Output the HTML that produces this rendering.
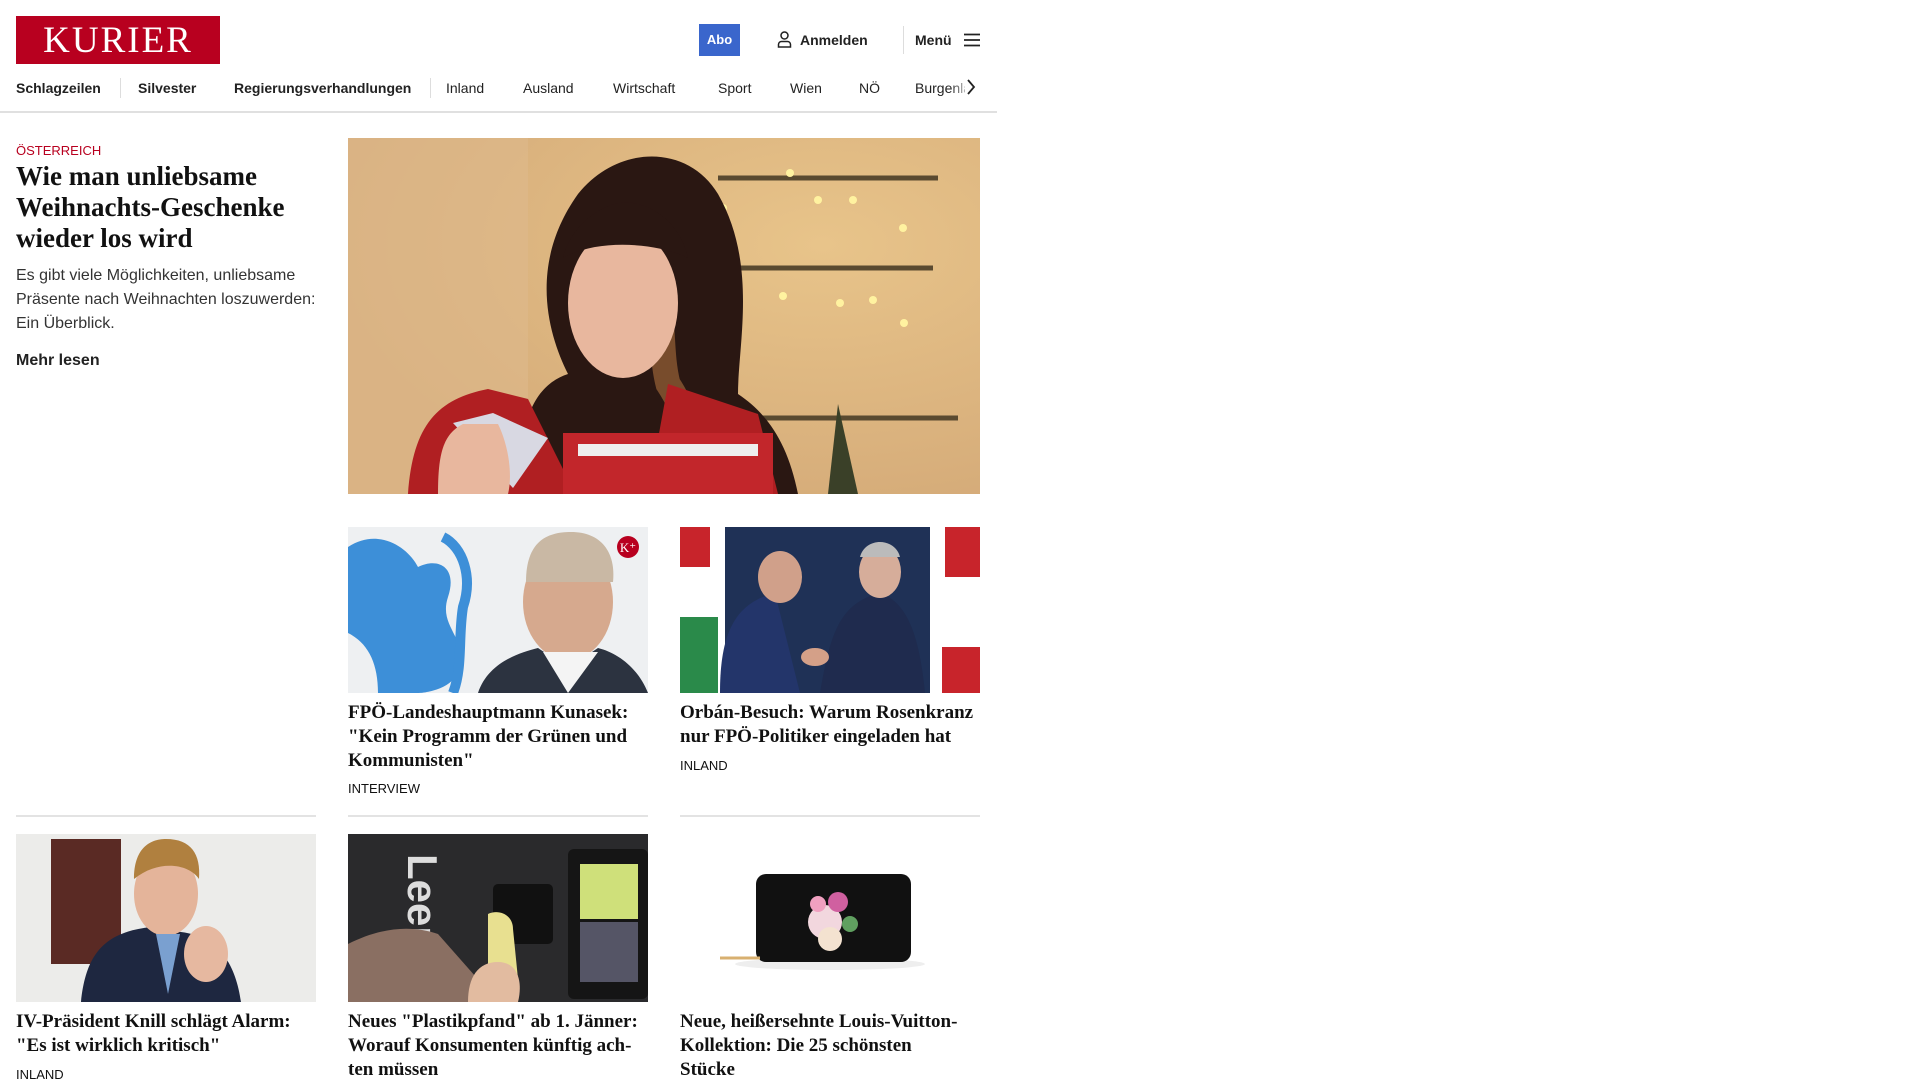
<!DOCTYPE html>
<html><head><meta charset="utf-8">
<style>
*{margin:0;padding:0;box-sizing:border-box}
body{width:1920px;height:1080px;overflow:hidden;background:#fff;font-family:"Liberation Sans",sans-serif;color:#1a1a1a;position:relative}
.a{position:absolute}
.logo{left:16px;top:16px;width:204px;height:48px;background:#b8001f;color:#fff;font-family:"Liberation Serif",serif;font-size:37px;letter-spacing:2px;text-align:center;line-height:50px}
.abo{left:699px;top:24px;width:41px;height:32px;background:#3a66cc;color:#fff;font-size:13px;font-weight:bold;text-align:center;line-height:32px}
.nav{top:80px;font-size:14px;color:#222;white-space:nowrap}
.sep{width:1px;background:#ddd}
.slab{font-family:"Liberation Serif",serif;font-weight:bold;color:#111}
.t{font-size:19px;line-height:24px;width:304px}
.tag{font-size:13px;color:#111}
.hr{height:2px;background:#e3e3e3;top:815px;width:300px}
</style></head><body>
<div class="a logo">KURIER</div>
<div class="a abo">Abo</div>
<svg class="a" style="left:777px;top:31px" width="15" height="17" viewBox="0 0 15 17"><circle cx="7.5" cy="4.5" r="3.5" fill="none" stroke="#222" stroke-width="1.5"/><path d="M1.5 16v-2.5a3 3 0 0 1 3-3h6a3 3 0 0 1 3 3V16z" fill="none" stroke="#222" stroke-width="1.5"/></svg>
<div class="a" style="left:800px;top:32px;font-size:14px;font-weight:bold;color:#222">Anmelden</div>
<div class="a sep" style="left:903px;top:26px;height:28px"></div>
<div class="a" style="left:915px;top:32px;font-size:14px;font-weight:bold;color:#222">Menü</div>
<svg class="a" style="left:964px;top:33px" width="16" height="14"><path d="M0 1.5h16M0 7h16M0 12.5h16" stroke="#222" stroke-width="1.8"/></svg>

<div class="a nav" style="left:16px;font-weight:bold">Schlagzeilen</div>
<div class="a sep" style="left:120px;top:78px;height:20px"></div>
<div class="a nav" style="left:138px;font-weight:bold">Silvester</div>
<div class="a nav" style="left:234px;font-weight:bold">Regierungsverhandlungen</div>
<div class="a sep" style="left:430px;top:78px;height:20px"></div>
<div class="a nav" style="left:446px">Inland</div>
<div class="a nav" style="left:523px">Ausland</div>
<div class="a nav" style="left:613px">Wirtschaft</div>
<div class="a nav" style="left:718px">Sport</div>
<div class="a nav" style="left:790px">Wien</div>
<div class="a nav" style="left:859px">NÖ</div>
<div class="a nav" style="left:915px;width:50px;overflow:hidden">Burgenland</div>
<div class="a" style="left:950px;top:74px;width:22px;height:26px;background:linear-gradient(90deg,rgba(255,255,255,0),#fff)"></div>
<svg class="a" style="left:966px;top:79px" width="10" height="16"><path d="M2 1l6 7-6 7" fill="none" stroke="#222" stroke-width="1.8"/></svg>
<div class="a" style="left:0;top:111px;width:997px;height:2px;background:#e0e0e0"></div>

<div class="a" style="left:16px;top:143px;font-size:13px;color:#b8001f">ÖSTERREICH</div>
<div class="a slab" style="left:16px;top:161px;width:310px;font-size:27px;line-height:31px">Wie man unliebsame Weihnachts-Geschenke wieder los wird</div>
<div class="a" style="left:16px;top:264px;width:310px;font-size:16px;line-height:24px;color:#333">Es gibt viele Möglichkeiten, unliebsame Präsente nach Weihnachten loszuwerden: Ein Überblick.</div>
<div class="a" style="left:16px;top:352px;font-size:16px;font-weight:bold;color:#222">Mehr lesen</div>

<svg class="a" style="left:348px;top:138px" width="632" height="356" viewBox="0 0 632 356">
<defs><radialGradient id="g1" cx="0.75" cy="0.3" r="0.8"><stop offset="0" stop-color="#e8c48a"/><stop offset="1" stop-color="#d4aa78"/></radialGradient></defs>
<rect width="632" height="356" fill="url(#g1)"/>
<rect x="0" y="0" width="180" height="356" fill="#ddb98c" opacity=".6"/>
<path d="M370 40h220M385 130h200M410 280h200" stroke="#5a4a30" stroke-width="5"/>
<g fill="#fff2a0"><circle cx="442" cy="35" r="4"/><circle cx="470" cy="62" r="4"/><circle cx="505" cy="62" r="4"/><circle cx="555" cy="90" r="4"/><circle cx="435" cy="158" r="4"/><circle cx="492" cy="165" r="4"/><circle cx="525" cy="162" r="4"/><circle cx="556" cy="185" r="4"/><circle cx="375" cy="70" r="4"/></g>
<path d="M480 356l10-90 20 90z" fill="#3a4028"/>
<path d="M170 356c0-80 20-110 50-120-20-40-40-110 10-180 40-50 110-50 140 0 40 70 20 150 20 200 30 20 50 50 60 100z" fill="#2a1712"/>
<path d="M350 356c0-40 -10-80 -30-110 -10-40 0-80 -20-100" fill="none" stroke="#9a6438" stroke-width="25" opacity=".7"/>
<ellipse cx="275" cy="165" rx="55" ry="75" fill="#e8b79e"/>
<path d="M215 120c10-40 50-60 70-55 30 5 50 30 55 55-30-15-90-20-125 0z" fill="#2a1712"/>
<path d="M60 356c5-70 30-95 80-105l40 10 50 100zM300 356l20-110 90 30 20 80z" fill="#b01f22"/>
<rect x="215" y="295" width="210" height="61" fill="#c2262b"/>
<path d="M230 312h180" stroke="#eee" stroke-width="12"/>
<path d="M105 285l40-10 55 25-35 50z" fill="#d8d8e2"/>
<path d="M90 356c0-40 5-60 25-70h35c10 20 15 50 10 70z" fill="#e8b79e"/>
</svg>

<!-- row 2 -->
<svg class="a" style="left:348px;top:527px" width="300" height="166" viewBox="0 0 300 166">
<rect width="300" height="166" fill="#eef0f2"/>
<path d="M0 20c30-20 60 0 70 20 20-10 40 0 30 30-10 30 20 40 10 70 0 20-30 26-40 26H30c0-30-10-50-30-60z" fill="#3d8fd8"/>
<path d="M95 10c20 10 30 40 20 70-5 30 0 60-10 86" fill="none" stroke="#3d8fd8" stroke-width="10"/>
<ellipse cx="220" cy="75" rx="45" ry="58" fill="#d6a98e"/>
<path d="M178 55c0-40 20-50 45-50 30 0 45 20 42 50z" fill="#c9b8a4"/>
<path d="M130 166c10-30 40-40 60-45l30 20 30-20c20 5 40 20 50 45z" fill="#2c3340"/>
<path d="M195 125l25 41 30-41z" fill="#f4f4f4"/>
<circle cx="280" cy="20" r="11" fill="#b8001f"/><text x="280" y="25" font-family="Liberation Serif" font-size="13" fill="#fff" text-anchor="middle">K⁺</text>
</svg>
<svg class="a" style="left:680px;top:527px" width="300" height="166" viewBox="0 0 300 166">
<rect width="300" height="166" fill="#1f3156"/>
<path d="M0 0h45v166H0z" fill="#fff"/><path d="M0 0h30v40H0z" fill="#c8242b"/><path d="M0 90h38v76H0z" fill="#2a8a4a"/>
<path d="M250 0h50v166h-50z" fill="#fff"/><path d="M265 0h35v50h-35zM262 120h38v46h-38z" fill="#c8242b"/>
<path d="M40 166c0-60 15-90 55-100l25 100z" fill="#23356a"/>
<ellipse cx="100" cy="50" rx="22" ry="26" fill="#d0a08a"/>
<path d="M140 166c10-60 20-90 60-100 30 10 40 50 45 100z" fill="#1f2b4e"/>
<ellipse cx="200" cy="45" rx="21" ry="26" fill="#d6ad9a"/>
<path d="M180 30c5-20 35-20 40 0z" fill="#bbb"/>
<ellipse cx="135" cy="130" rx="14" ry="9" fill="#d4a088"/>
</svg>
<div class="a slab t" style="left:348px;top:701px">FPÖ-Landeshauptmann Kunasek: "Kein Programm der Grünen und Kommunisten"</div>
<div class="a tag" style="left:348px;top:781px">INTERVIEW</div>
<div class="a slab t" style="left:680px;top:701px">Orbán-Besuch: Warum Rosenkranz nur FPÖ-Politiker eingeladen hat</div>
<div class="a tag" style="left:680px;top:758px">INLAND</div>

<div class="a hr" style="left:16px"></div>
<div class="a hr" style="left:348px"></div>
<div class="a hr" style="left:680px"></div>

<!-- row 3 -->
<svg class="a" style="left:16px;top:834px" width="300" height="168" viewBox="0 0 300 168">
<rect width="300" height="168" fill="#ececea"/>
<rect x="35" y="5" width="70" height="125" fill="#5a2a24"/>
<path d="M65 168c5-50 25-70 70-75l30 5c40 5 55 35 60 70z" fill="#1e2740"/>
<ellipse cx="150" cy="60" rx="32" ry="42" fill="#e4b49a"/>
<path d="M118 45c0-30 15-40 32-40 25 0 35 15 33 40-10-15-40-20-65 0z" fill="#b0803f"/>
<path d="M140 100l12 60 12-60z" fill="#7aa0d0"/>
<ellipse cx="190" cy="120" rx="22" ry="28" fill="#e6b8a0"/>
</svg>
<svg class="a" style="left:348px;top:834px" width="300" height="168" viewBox="0 0 300 168">
<rect width="300" height="168" fill="#2a2a2c"/>
<rect x="220" y="15" width="80" height="150" rx="6" fill="#151515"/>
<rect x="232" y="30" width="58" height="55" fill="#cfe07a"/><rect x="232" y="88" width="58" height="60" fill="#556"/>
<rect x="145" y="50" width="60" height="60" rx="5" fill="#111"/>
<text x="60" y="20" transform="rotate(90 60 20)" font-family="Liberation Sans" font-size="42" font-weight="bold" fill="#ddd">Leergut</text>
<path d="M140 80c10-5 25 0 25 15l5 50c-5 10-25 10-30 0z" fill="#e8e090"/>
<path d="M0 110c30-15 60-20 90-10l60 68H0z" fill="#8a6f62"/>
<path d="M120 168c0-25 10-40 30-40s25 20 20 40z" fill="#e2bba0"/>
</svg>
<svg class="a" style="left:680px;top:834px" width="300" height="168" viewBox="0 0 300 168">
<rect width="300" height="168" fill="#fff"/>
<ellipse cx="150" cy="130" rx="95" ry="6" fill="#eee"/>
<rect x="76" y="40" width="155" height="88" rx="10" fill="#111"/>
<path d="M40 124h40" stroke="#d8b070" stroke-width="3"/>
<circle cx="145" cy="88" r="17" fill="#f2d7de"/><circle cx="158" cy="68" r="10" fill="#d060a0"/><circle cx="138" cy="70" r="8" fill="#f0a0c0"/><circle cx="150" cy="105" r="12" fill="#f4e2d0"/><circle cx="170" cy="90" r="8" fill="#60a060"/>
</svg>
<div class="a slab t" style="left:16px;top:1010px">IV-Präsident Knill schlägt Alarm:<br>"Es ist wirklich kritisch"</div>
<div class="a tag" style="left:16px;top:1067px">INLAND</div>
<div class="a slab t" style="left:348px;top:1010px">Neues "Plastikpfand" ab 1. Jänner:<br>Worauf Konsumenten künftig ach-<br>ten müssen</div>
<div class="a slab t" style="left:680px;top:1010px">Neue, heißersehnte Louis-Vuitton-<br>Kollektion: Die 25 schönsten<br>Stücke</div>
</body></html>
